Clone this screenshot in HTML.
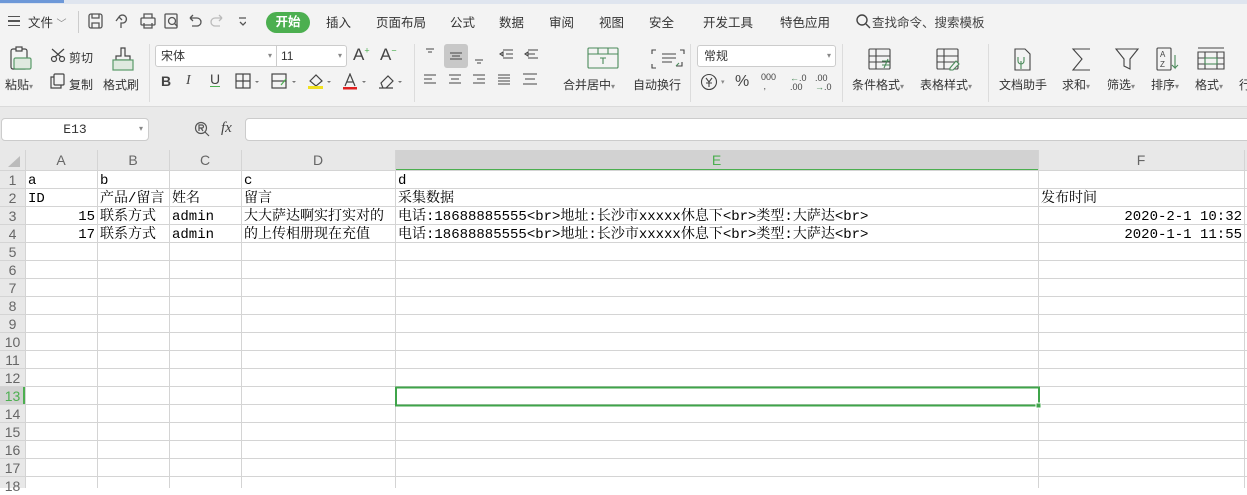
<!DOCTYPE html>
<html><head><meta charset="utf-8"><style>
*{margin:0;padding:0;box-sizing:border-box}
body{width:1247px;height:488px;overflow:hidden;background:#fff;font-family:"Liberation Sans","Noto Sans CJK SC",sans-serif;position:relative}
.a{position:absolute;white-space:nowrap}
.tab{position:absolute;top:12px;font-size:12.5px;color:#333}
.lbl{position:absolute;font-size:12px;color:#333}
.ic{position:absolute}
.cell{position:absolute;font-family:"Liberation Mono","Noto Serif CJK SC",monospace;font-size:14px;color:#000;line-height:18px;white-space:nowrap}
.rn{position:absolute;left:0;width:25px;text-align:center;font-size:14px;color:#666;line-height:18px;font-family:"Liberation Sans",sans-serif}
.ch{position:absolute;top:150px;height:21px;line-height:21px;text-align:center;font-size:14px;color:#666}
.sep{position:absolute;top:44px;width:1px;height:58px;background:#dcdcdc}
.dd{font-size:8px;color:#888}
</style></head><body>
<div class="a" style="left:0;top:0;width:1247px;height:4px;background:#dfe5ef"></div>
<div class="a" style="left:0;top:0;width:64px;height:3px;background:#6d98d8"></div>
<div class="a" style="left:0;top:4px;width:1247px;height:102px;background:#f3f3f3"></div>
<div class="a" style="left:0;top:106px;width:1247px;height:44px;background:#e9e9e9;border-top:1px solid #dadada"></div>

<div class="a" style="left:8px;top:16px;width:12px;height:10px;border-top:1.5px solid #555;border-bottom:1.5px solid #555"></div>
<div class="a" style="left:8px;top:20px;width:12px;height:1.5px;background:#555"></div>
<div class="tab" style="left:28px">文件 <span style="color:#888;font-size:10px">﹀</span></div>
<div class="a" style="left:78px;top:11px;width:1px;height:22px;background:#ccc"></div>
<svg class="ic" style="left:86px;top:12px" width="160" height="20" fill="none" stroke="#555" stroke-width="1.3">
<rect x="3" y="2" width="13" height="14" rx="2"/><path d="M6 2v4h7V2M6 16v-5h7v5"/>
<path d="M33 5a4 4 0 1 1 4 6h-2v5M30 9l3-4 3 3"/>
<rect x="55" y="6" width="14" height="7" rx="1"/><path d="M58 6V2h8v4M58 11v5h8v-5"/>
<rect x="79" y="2" width="12" height="14" rx="1"/><circle cx="86" cy="9" r="3.5"/><path d="M88.5 11.5l3 3"/>
<path d="M104 6h7a4 4 0 0 1 0 8h-5M104 6l3-3M104 6l3 3"/>
<path stroke="#bbb" d="M136 6h-7a4 4 0 0 0 0 8h5M136 6l-3-3M136 6l-3 3"/>
<path d="M153 6h8M154 10l3 3 3-3"/>
</svg>
<div class="a" style="left:266px;top:12px;width:44px;height:21px;border-radius:11px;background:#4caf50;color:#fff;font-size:12.5px;text-align:center;line-height:21px;font-weight:bold">开始</div>
<div class="tab" style="left:326px">插入</div>
<div class="tab" style="left:376px">页面布局</div>
<div class="tab" style="left:450px">公式</div>
<div class="tab" style="left:499px">数据</div>
<div class="tab" style="left:549px">审阅</div>
<div class="tab" style="left:599px">视图</div>
<div class="tab" style="left:649px">安全</div>
<div class="tab" style="left:703px">开发工具</div>
<div class="tab" style="left:780px">特色应用</div>
<svg class="ic" style="left:855px;top:13px" width="16" height="16" fill="none" stroke="#444" stroke-width="1.4"><circle cx="7" cy="7" r="5"/><path d="M11 11l4 4"/></svg>
<div class="tab" style="left:872px;color:#444">查找命令、搜索模板</div>

<svg class="ic" style="left:8px;top:46px" width="130" height="26" fill="none" stroke="#444" stroke-width="1.2">
<rect x="3" y="3" width="16" height="20" rx="2"/><rect x="8" y="1" width="6" height="4" fill="#f3f3f3"/>
<rect x="6" y="12" width="17" height="11" rx="1.5" fill="#dfe9df" stroke="#5a9a6a"/>
<circle cx="46" cy="13" r="2.5"/><circle cx="54" cy="13" r="2.5"/><path d="M44 3l9 8M56 3l-9 8"/>
<path d="M113 2h4v8h5v4h-14v-4h5z"/><rect x="105" y="14" width="20" height="10" fill="#dfe9df" stroke="#5a9a6a"/>
</svg>
<div class="lbl" style="left:69px;top:49px">剪切</div>
<div class="lbl" style="left:5px;top:76px">粘贴<span class="dd">▾</span></div>
<svg class="ic" style="left:50px;top:73px" width="16" height="16" fill="none" stroke="#444" stroke-width="1.2"><rect x="4" y="1" width="10" height="11" rx="1"/><path d="M4 4H1v11h10v-3"/></svg>
<div class="lbl" style="left:69px;top:76px">复制</div>
<div class="lbl" style="left:103px;top:76px">格式刷</div>
<div class="sep" style="left:149px"></div>

<div class="a" style="left:155px;top:45px;width:122px;height:22px;background:#fff;border:1px solid #ccc;border-radius:3px 0 0 3px;font-size:12px;line-height:20px;padding-left:5px;color:#333">宋体<span class="dd" style="position:absolute;right:4px">▾</span></div>
<div class="a" style="left:276px;top:45px;width:71px;height:22px;background:#fff;border:1px solid #ccc;border-radius:0 3px 3px 0;font-size:12px;line-height:20px;padding-left:4px;color:#333">11<span class="dd" style="position:absolute;right:4px">▾</span></div>
<div class="a" style="left:353px;top:45px;font-size:17px;color:#444">A<sup style="font-size:9px;color:#4caf50">+</sup></div>
<div class="a" style="left:380px;top:45px;font-size:17px;color:#444">A<sup style="font-size:9px;color:#4caf50">−</sup></div>
<div class="a" style="left:161px;top:73px;font-size:14px;font-weight:bold;color:#444">B</div>
<div class="a" style="left:186px;top:73px;font-size:14px;font-style:italic;color:#444;font-family:'Liberation Serif',serif">I</div>
<div class="a" style="left:210px;top:72px;font-size:14px;color:#444;border-bottom:1.5px solid #4caf50;line-height:14px">U</div>
<svg class="ic" style="left:235px;top:73px" width="180" height="18" fill="none" stroke="#444" stroke-width="1.2">
<rect x="1" y="1" width="14" height="14"/><path d="M8 1v14M1 8h14"/><path d="M20 8l2 2 2-2" fill="#777" stroke="none"/>
<rect x="37" y="1" width="14" height="14"/><path d="M37 8h14"/><path d="M46 12l5-6" stroke="#4caf50"/><path d="M57 8l2 2 2-2" fill="#777" stroke="none"/>
<path d="M75 8l6-6 6 6-6 5z"/><rect x="73" y="13" width="15" height="3" fill="#f0e020" stroke="none"/><path d="M92 8l2 2 2-2" fill="#777" stroke="none"/>
<path d="M110 13l5-12 5 12M112 9h6"/><rect x="108" y="14" width="14" height="2.5" fill="#e02020" stroke="none"/><path d="M127 8l2 2 2-2" fill="#777" stroke="none"/>
<path d="M146 10l7-7 5 5-7 7h-3zM144 15h14"/><path d="M163 8l2 2 2-2" fill="#777" stroke="none"/>
</svg>
<div class="sep" style="left:414px"></div>

<svg class="ic" style="left:420px;top:44px" width="280" height="50" fill="none" stroke="#444" stroke-width="1.1">
<rect x="24" y="0" width="24" height="24" rx="3" fill="#c8c8c8" stroke="none"/>
<path d="M6 5h8M8 8h4M30 9h12M32 12h8M30 15h12M55 16h8M57 19h4"/>
<path d="M83 6h10M86 10h7M83 14h10M80 10l3-2v4z" /><path d="M108 6h10M108 10h7M108 14h10M105 10l3-2v4z"/>
<path d="M4 31h12M4 35h8M4 39h12M29 31h12M31 35h8M29 39h12M53 31h12M57 35h8M53 39h12M78 31h12M78 34h12M78 37h12M78 40h12M103 30h14M103 40h14M105 35h10"/>
<rect x="168" y="4" width="30" height="20" rx="1" stroke="#4a8a5a"/><path d="M168 10h30M178 4v6M188 4v6M180 14h6M183 14v6" stroke="#4a8a5a"/>
<path d="M236 6h-4v4M260 6h4v4M236 24h-4v-4M242 10h14M242 14h14M242 18h10M256 22h6v-4" /><path d="M256 22l3-3" stroke="#4a8a5a"/>
</svg>
<div class="lbl" style="left:563px;top:76px">合并居中<span class="dd">▾</span></div>
<div class="lbl" style="left:633px;top:76px">自动换行</div>
<div class="sep" style="left:690px"></div>

<div class="a" style="left:697px;top:45px;width:139px;height:22px;background:#fff;border:1px solid #ccc;border-radius:3px;font-size:12px;line-height:20px;padding-left:6px;color:#333">常规<span class="dd" style="position:absolute;right:4px">▾</span></div>
<svg class="ic" style="left:700px;top:73px" width="22" height="18" fill="none" stroke="#444" stroke-width="1.1"><circle cx="9" cy="9" r="7.5"/><path d="M6 5l3 4 3-4M9 9v5M6 10h6"/></svg>
<div class="a" style="left:721px;top:78px;font-size:7px;color:#888">▾</div>
<div class="a" style="left:735px;top:73px;font-size:16px;color:#444">%</div>
<div class="a" style="left:761px;top:73px;font-size:9px;color:#444;line-height:9px">000<br>&nbsp;,</div>
<div class="a" style="left:790px;top:74px;font-size:9px;color:#444;line-height:9px"><span style="color:#4a8a5a">←</span>.0<br>.00</div>
<div class="a" style="left:815px;top:74px;font-size:9px;color:#444;line-height:9px">.00<br><span style="color:#4a8a5a">→</span>.0</div>
<div class="sep" style="left:842px"></div>

<svg class="ic" style="left:860px;top:47px" width="420" height="26" fill="none" stroke="#444" stroke-width="1.1">
<rect x="9" y="2" width="21" height="20" rx="1"/><path d="M9 9h21M9 15h21M16 2v20"/><path d="M22 14h8M22 18h8M28 12l-4 9" stroke="#4a8a5a"/>
<rect x="77" y="2" width="21" height="20" rx="1"/><path d="M77 9h21M77 15h21M84 2v20"/><path d="M90 21l6-7 3 3-6 6h-3z" stroke="#4a8a5a" fill="#f3f3f3"/>
<path d="M155 2h10l5 5v16h-15z"/><path d="M161 14v8M158 10v4a3 3 0 0 0 6 0v-4" stroke="#4a8a5a"/>
<path d="M230 2h-17l9 10-9 11h17"/>
<path d="M256 2h22l-8 10v10l-6-3v-7z"/>
<rect x="297" y="1" width="14" height="22" rx="1"/><text x="300" y="10" font-size="8" fill="#444" stroke="none" font-family="Liberation Sans">A</text><text x="300" y="20" font-size="8" fill="#444" stroke="none" font-family="Liberation Sans">Z</text><path d="M315 8v13l-3-3M315 21l3-3" stroke="#4a8a5a"/>
<path d="M338 1h26M338 5h26v17h-26zM338 11h26M338 17h26M345 5v17M357 5v17"/><rect x="345" y="11" width="12" height="6" stroke="#4a8a5a"/>
</svg>
<div class="lbl" style="left:852px;top:76px">条件格式<span class="dd">▾</span></div>
<div class="lbl" style="left:920px;top:76px">表格样式<span class="dd">▾</span></div>
<div class="sep" style="left:988px"></div>
<div class="lbl" style="left:999px;top:76px">文档助手</div>
<div class="lbl" style="left:1062px;top:76px">求和<span class="dd">▾</span></div>
<div class="lbl" style="left:1107px;top:76px">筛选<span class="dd">▾</span></div>
<div class="lbl" style="left:1151px;top:76px">排序<span class="dd">▾</span></div>
<div class="lbl" style="left:1195px;top:76px">格式<span class="dd">▾</span></div>
<div class="lbl" style="left:1239px;top:76px">行</div>

<div class="a" style="left:1px;top:118px;width:148px;height:23px;background:#fff;border:1px solid #ccc;border-radius:4px;font-family:'Liberation Mono',monospace;font-size:13px;text-align:center;line-height:21px;color:#333">E13<span class="dd" style="position:absolute;right:5px">▾</span></div>
<svg class="ic" style="left:194px;top:121px" width="18" height="18" fill="none" stroke="#555" stroke-width="1.2"><circle cx="7" cy="7" r="5.5"/><path d="M5 10V4h3a1.5 1.5 0 0 1 0 3H5M7 7l2 3M11 11l4 4"/></svg>
<div class="a" style="left:221px;top:120px;font-size:15px;font-style:italic;color:#444;font-family:'Liberation Serif',serif">fx</div>
<div class="a" style="left:245px;top:118px;width:1010px;height:23px;background:#fff;border:1px solid #ccc;border-radius:4px"></div>

<div class="a" style="left:0;top:150px;width:1247px;height:21px;background:#e8e8e8"></div>
<div class="a" style="left:0;top:171px;width:25px;height:317px;background:#e8e8e8"></div>
<div class="a" style="left:395px;top:150px;width:643px;height:21px;background:#d2d2d2;border-bottom:2px solid #4caf50"></div>
<div class="a" style="left:0;top:387px;width:25px;height:18px;background:#d2d2d2;border-right:2px solid #4caf50"></div>
<svg class="ic" style="left:7px;top:155px" width="14" height="12"><path d="M13 1v11H1z" fill="#bbb"/></svg>
<svg class="a" style="left:0;top:150px" width="1247" height="338">
<g stroke="#d4d4d4" stroke-width="1">
<line x1="25.5" y1="0" x2="25.5" y2="338"/>
<line x1="97.5" y1="0" x2="97.5" y2="338"/><line x1="169.5" y1="0" x2="169.5" y2="338"/>
<line x1="241.5" y1="0" x2="241.5" y2="338"/><line x1="395.5" y1="0" x2="395.5" y2="338"/>
<line x1="1038.5" y1="0" x2="1038.5" y2="338"/><line x1="1244.5" y1="0" x2="1244.5" y2="338"/>
<line x1="0" y1="20.5" x2="1247" y2="20.5"/>
<line x1="0" y1="38.5" x2="1247" y2="38.5"/><line x1="0" y1="56.5" x2="1247" y2="56.5"/><line x1="0" y1="74.5" x2="1247" y2="74.5"/><line x1="0" y1="92.5" x2="1247" y2="92.5"/><line x1="0" y1="110.5" x2="1247" y2="110.5"/><line x1="0" y1="128.5" x2="1247" y2="128.5"/><line x1="0" y1="146.5" x2="1247" y2="146.5"/><line x1="0" y1="164.5" x2="1247" y2="164.5"/><line x1="0" y1="182.5" x2="1247" y2="182.5"/><line x1="0" y1="200.5" x2="1247" y2="200.5"/><line x1="0" y1="218.5" x2="1247" y2="218.5"/><line x1="0" y1="236.5" x2="1247" y2="236.5"/><line x1="0" y1="254.5" x2="1247" y2="254.5"/><line x1="0" y1="272.5" x2="1247" y2="272.5"/><line x1="0" y1="290.5" x2="1247" y2="290.5"/><line x1="0" y1="308.5" x2="1247" y2="308.5"/><line x1="0" y1="326.5" x2="1247" y2="326.5"/>
</g>
<rect x="396" y="237.5" width="643" height="18" fill="none" stroke="#3fa44a" stroke-width="2"/>
<rect x="1036" y="253" width="5" height="5" fill="#3fa44a" stroke="#fff" stroke-width="1"/>
</svg>
<div class="ch" style="left:25px;width:72px">A</div>
<div class="ch" style="left:97px;width:72px">B</div>
<div class="ch" style="left:169px;width:72px">C</div>
<div class="ch" style="left:241px;width:154px">D</div>
<div class="ch" style="left:395px;width:643px;color:#4caf50">E</div>
<div class="ch" style="left:1038px;width:206px">F</div>

<div class="rn" style="top:171px">1</div><div class="rn" style="top:189px">2</div><div class="rn" style="top:207px">3</div><div class="rn" style="top:225px">4</div><div class="rn" style="top:243px">5</div><div class="rn" style="top:261px">6</div><div class="rn" style="top:279px">7</div><div class="rn" style="top:297px">8</div><div class="rn" style="top:315px">9</div><div class="rn" style="top:333px">10</div><div class="rn" style="top:351px">11</div><div class="rn" style="top:369px">12</div><div class="rn" style="top:387px;color:#4caf50">13</div><div class="rn" style="top:405px">14</div><div class="rn" style="top:423px">15</div><div class="rn" style="top:441px">16</div><div class="rn" style="top:459px">17</div><div class="rn" style="top:477px">18</div>

<div class="cell" style="left:28px;top:172px">a</div>
<div class="cell" style="left:100px;top:172px">b</div>
<div class="cell" style="left:244px;top:172px">c</div>
<div class="cell" style="left:398px;top:172px">d</div>
<div class="cell" style="left:28px;top:190px">ID</div>
<div class="cell" style="left:100px;top:190px">产品/留言</div>
<div class="cell" style="left:172px;top:190px">姓名</div>
<div class="cell" style="left:244px;top:190px">留言</div>
<div class="cell" style="left:398px;top:190px">采集数据</div>
<div class="cell" style="left:1041px;top:190px">发布时间</div>
<div class="cell" style="left:28px;top:208px;width:67px;text-align:right">15</div>
<div class="cell" style="left:100px;top:208px">联系方式</div>
<div class="cell" style="left:172px;top:208px">admin</div>
<div class="cell" style="left:244px;top:208px">大大萨达啊实打实对的</div>
<div class="cell" style="left:398px;top:208px">电话:18688885555&lt;br&gt;地址:长沙市xxxxx休息下&lt;br&gt;类型:大萨达&lt;br&gt;</div>
<div class="cell" style="left:1041px;top:208px;width:201px;text-align:right">2020-2-1 10:32</div>
<div class="cell" style="left:28px;top:226px;width:67px;text-align:right">17</div>
<div class="cell" style="left:100px;top:226px">联系方式</div>
<div class="cell" style="left:172px;top:226px">admin</div>
<div class="cell" style="left:244px;top:226px">的上传相册现在充值</div>
<div class="cell" style="left:398px;top:226px">电话:18688885555&lt;br&gt;地址:长沙市xxxxx休息下&lt;br&gt;类型:大萨达&lt;br&gt;</div>
<div class="cell" style="left:1041px;top:226px;width:201px;text-align:right">2020-1-1 11:55</div>
</body></html>
